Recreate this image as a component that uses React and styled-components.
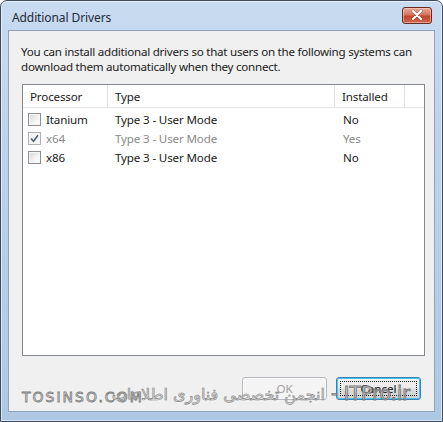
import React from 'react';
import styled, { createGlobalStyle } from 'styled-components';

const drivers = [
  { processor: 'Itanium', type: 'Type 3 - User Mode', installed: 'No', checked: false, disabled: false },
  { processor: 'x64', type: 'Type 3 - User Mode', installed: 'Yes', checked: true, disabled: true },
  { processor: 'x86', type: 'Type 3 - User Mode', installed: 'No', checked: false, disabled: false },
];

export default function App() {
  return (
    <>
      <GlobalStyle />
      <Window>
        <TitleBar>
          <Title>Additional Drivers</Title>
          <CloseButton aria-label="Close">
            <svg width="12" height="10" viewBox="0 0 12 10">
              <path d="M2 1 L10 9 M10 1 L2 9" stroke="#5a1a12" strokeWidth="3.2" strokeLinecap="round" opacity="0.35" />
              <path d="M2 1 L10 9 M10 1 L2 9" stroke="#ffffff" strokeWidth="2.2" strokeLinecap="round" />
            </svg>
          </CloseButton>
        </TitleBar>
        <Content>
          <Description>
            <Line>You can install additional drivers so that users on the following systems can</Line>
            <Line>download them automatically when they connect.</Line>
          </Description>
          <ListBox>
            <HeaderRow>
              <HeaderCell width={85}>Processor</HeaderCell>
              <HeaderCell width={227}>Type</HeaderCell>
              <HeaderCell width={70}>Installed</HeaderCell>
              <HeaderFiller />
            </HeaderRow>
            <Rows>
              {drivers.map(d => (
                <Row key={d.processor} disabled={d.disabled}>
                  <Cell width={85}>
                    <Check checked={d.checked} disabled={d.disabled}>
                      {d.checked && (
                        <svg width="9" height="9" viewBox="0 0 9 9">
                          <path d="M1 4.5 L3.5 7.2 L8 1.2" fill="none" stroke="#4a5e78" strokeWidth="1.6" />
                        </svg>
                      )}
                    </Check>
                    {d.processor}
                  </Cell>
                  <Cell width={227} pad={7}>{d.type}</Cell>
                  <Cell width={70} pad={8}>{d.installed}</Cell>
                </Row>
              ))}
            </Rows>
          </ListBox>
          <ButtonBar>
            <Button disabled>OK</Button>
            <Button focused>Cancel</Button>
          </ButtonBar>
          <Watermark>
            <LatinMark>TOSINSO.COM</LatinMark>
            <MarkRow>
              <PersianMark dir="rtl">انجمن تخصصی فناوری اطلاعات</PersianMark>
              <SiteMark>- ITPro.ir</SiteMark>
            </MarkRow>
          </Watermark>
        </Content>
      </Window>
    </>
  );
}

const GlobalStyle = createGlobalStyle`
  html, body {
    margin: 0;
    padding: 0;
    background: #ffffff;
  }
  body {
    font-family: "Noto Sans", "Liberation Sans", sans-serif;
  }
`;

const Window = styled.div`
  width: 443px;
  height: 422px;
  box-sizing: border-box;
  border: 1px solid #3d4b5e;
  border-radius: 7px 7px 0 0;
  background: linear-gradient(180deg, #c8dbf0 0%, #bcd2ea 40%, #aec8e4 100%);
  padding: 0 7px 9px 7px;
  display: flex;
  flex-direction: column;
  box-shadow: inset 0 0 0 1px rgba(255, 255, 255, 0.55);
`;

const TitleBar = styled.div`
  height: 29px;
  display: flex;
  align-items: center;
  justify-content: space-between;
  padding: 0 3px 0 4px;
`;

const Title = styled.div`
  font-size: 12px;
  color: #1e2a38;
  margin-top: 3px;
  letter-spacing: -0.1px;
`;

const CloseButton = styled.div`
  width: 30px;
  height: 17px;
  box-sizing: border-box;
  margin-top: -1px;
  border: 1px solid #6a2a22;
  border-radius: 3px;
  background: linear-gradient(180deg, #e9a99b 0%, #d8735e 45%, #c2442c 55%, #cf6a4f 100%);
  box-shadow: inset 0 0 0 1px rgba(255, 220, 210, 0.5);
  display: flex;
  align-items: center;
  justify-content: center;
`;

const Content = styled.div`
  position: relative;
  flex: 1;
  background: #f0f0f0;
  border: 1px solid #8ea4be;
  padding: 13px 12px 0 12px;
  display: flex;
  flex-direction: column;
  font-size: 11.6px;
  color: #1a1a1a;
`;

const Description = styled.div`
  line-height: 15px;
  letter-spacing: -0.25px;
`;

const Line = styled.div`
  white-space: nowrap;
`;

const ListBox = styled.div`
  margin: 10px 0 0 1px;
  width: 403px;
  height: 272px;
  box-sizing: border-box;
  border: 1px solid #828790;
  background: #ffffff;
  display: flex;
  flex-direction: column;
`;

const HeaderRow = styled.div`
  display: flex;
  height: 22px;
  border-bottom: 1px solid #e5e5e5;
`;

const HeaderCell = styled.div`
  width: ${p => p.width}px;
  box-sizing: border-box;
  padding-left: 7px;
  border-right: 1px solid #e3e3e3;
  display: flex;
  align-items: center;
  letter-spacing: -0.15px;
`;

const HeaderFiller = styled.div`
  flex: 1;
`;

const Rows = styled.div`
  padding-top: 2px;
`;

const Row = styled.div`
  display: flex;
  height: 19px;
  align-items: center;
  color: ${p => (p.disabled ? '#8a8a8a' : '#1a1a1a')};
`;

const Cell = styled.div`
  width: ${p => p.width}px;
  box-sizing: border-box;
  padding-left: ${p => (p.pad === undefined ? 5 : p.pad)}px;
  display: flex;
  align-items: center;
  gap: 5px;
  letter-spacing: -0.15px;
  white-space: nowrap;
`;

const Check = styled.span`
  width: 13px;
  height: 13px;
  box-sizing: border-box;
  border: 1px solid ${p => (p.disabled ? '#b0b0b0' : '#8f8f8f')};
  background: ${p =>
    p.disabled ? '#f4f4f4' : 'linear-gradient(135deg, #d6d6d6 0%, #f4f4f4 60%, #ffffff 100%)'};
  box-shadow: inset 0 0 0 1px #f6f6f6;
  display: inline-flex;
  align-items: center;
  justify-content: center;
`;

const ButtonBar = styled.div`
  display: flex;
  justify-content: flex-end;
  gap: 9px;
  margin-top: 21px;
  padding-right: 1px;
`;

const Button = styled.div`
  width: 85px;
  height: 23px;
  box-sizing: border-box;
  border-radius: 3px;
  display: flex;
  align-items: center;
  justify-content: center;
  font-size: 11.6px;
  position: relative;
  color: ${p => (p.disabled ? '#a2a2a2' : '#111111')};
  border: 1px solid ${p => (p.focused ? '#3c7fb1' : '#b5b9bd')};
  background: ${p =>
    p.disabled
      ? '#f4f4f4'
      : 'linear-gradient(180deg, #f2f2f2 0%, #ebebeb 48%, #dddddd 52%, #cfcfcf 100%)'};
  box-shadow: ${p => (p.focused ? 'inset 0 0 0 1px #48c6f4' : 'inset 0 0 0 1px #fbfbfb')};

  &::after {
    content: '';
    display: ${p => (p.focused ? 'block' : 'none')};
    position: absolute;
    inset: 3px;
    border: 1px dotted #222;
  }
`;

const Watermark = styled.div`
  position: absolute;
  z-index: 2;
  left: 13px;
  right: 24px;
  bottom: 8px;
  height: 24px;
  pointer-events: none;
`;

const LatinMark = styled.div`
  position: absolute;
  left: 0;
  bottom: -2px;
  font-family: "DejaVu Sans", sans-serif;
  font-size: 14px;
  color: rgba(235, 235, 235, 0.6);
  -webkit-text-stroke: 0.8px #7c7c7c;
  letter-spacing: 2px;
`;

const MarkRow = styled.div`
  position: absolute;
  right: 0;
  bottom: -1px;
  display: flex;
  align-items: baseline;
  gap: 6px;
  white-space: nowrap;
`;

const PersianMark = styled.span`
  font-family: "DejaVu Sans", sans-serif;
  font-size: 16px;
  color: rgba(225, 225, 225, 0.55);
  -webkit-text-stroke: 0.7px #8a8a8a;
`;

const SiteMark = styled.span`
  font-family: "DejaVu Sans", sans-serif;
  font-size: 19px;
  color: rgba(200, 200, 200, 0.6);
  -webkit-text-stroke: 0.9px #7a7a7a;
`;
